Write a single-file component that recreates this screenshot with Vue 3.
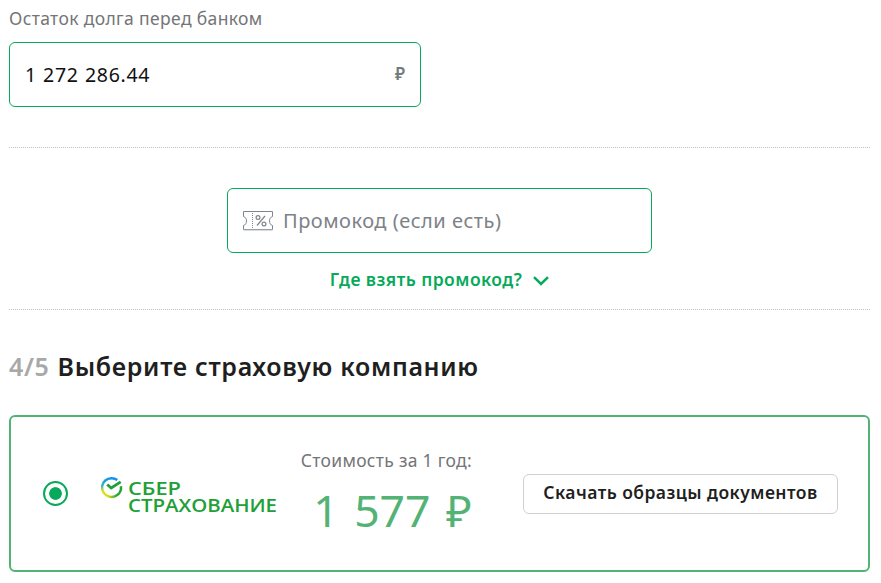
<script setup>
	import { ref } from 'vue';

	const debt = ref('1 272 286.44');
	const promo = ref('');
	const company = ref('sber');
</script>

<template>
	<div class="page">
		<!-- debt -->
		<div class="debt">
			<label for="debt"><span class="label-text">Остаток долга перед банком</span></label>
			<div class="field">
				<input id="debt" type="text" v-model="debt" />
				<span class="currency">₽</span>
			</div>
		</div>

		<!-- promo code -->
		<div class="promo">
			<div class="field promo-field">
				<svg class="ticket" width="30" height="20" viewBox="0 0 30 20" fill="none" stroke="#7d868c">
					<path d="M.5 .5H29.500V5.500C27.500 6 26.500 8 26.500 10S27.500 14 29.500 14.500V18.500H.5V14.500C2.500 14 3.500 12 3.500 10S2.500 6 .5 5.500Z" />
					<path d="M.5 19H29.500" stroke="#b5babd" />
					<path d="M9.500 2V17" stroke-dasharray="1 1" />
					<path d="M14 14.500L22 5" stroke-width="1.200" />
					<circle cx="15" cy="6.500" r="1.900" stroke-width="1.200" />
					<circle cx="21" cy="13" r="1.900" stroke-width="1.200" />
				</svg>
				<input type="text" v-model="promo" placeholder="Промокод (если есть)" />
			</div>
			<a class="where">
				<span>Где взять промокод?</span>
				<svg width="16" height="10" viewBox="0 0 16 10" fill="none" stroke="#07a95b" stroke-width="2.500">
					<path d="M1 1.200L8 8L15 1.200" />
				</svg>
			</a>
		</div>

		<!-- insurance company -->
		<h2><span class="step">4/5</span><span class="title">Выберите страховую компанию</span></h2>
		<div class="card">
			<label class="radio">
				<input type="radio" value="sber" v-model="company" />
			</label>
			<svg class="logo" width="178" height="40" viewBox="0 0 178 40">
				<defs>
					<linearGradient id="ring-left" x1="0" y1="0" x2="0" y2="1">
						<stop offset="0" stop-color="#1394e8" />
						<stop offset=".4" stop-color="#35b3c0" />
						<stop offset=".68" stop-color="#d5e22b" />
						<stop offset="1" stop-color="#d9df16" />
					</linearGradient>
					<linearGradient id="ring-right" x1="0" y1="0" x2="1" y2="0">
						<stop offset="0" stop-color="#cade19" />
						<stop offset=".6" stop-color="#36a93a" />
						<stop offset="1" stop-color="#21a038" />
					</linearGradient>
				</defs>
				<g fill="none" stroke-width="2.500">
					<path d="M17.300 4A9.300 9.300 0 0 0 11 2.200" stroke="#1294ee" />
					<path d="M11.500 2.200A9.300 9.300 0 0 0 9 20.500" stroke="url(#ring-left)" />
					<path d="M8.500 20.300A9.300 9.300 0 0 0 20.900 10.200" stroke="url(#ring-right)" />
					<path d="M7.200 8.500L11.200 12L20.700 5.800" stroke="#21a038" stroke-width="2.800" />
				</g>
				<g class="logo-text">
					<text x="28" y="18.500" textLength="53" lengthAdjust="spacingAndGlyphs">СБЕР</text>
					<text x="28" y="36" textLength="149" lengthAdjust="spacingAndGlyphs">СТРАХОВАНИЕ</text>
				</g>
			</svg>
			<div class="cost">
				<div class="cost-label">Стоимость за 1 год:</div>
				<div class="price">1 577 ₽</div>
			</div>
			<button><span>Скачать образцы документов</span></button>
		</div>
	</div>
</template>

<style>
	body {
		background: #fff;
		overflow: hidden;
	}
</style>

<style scoped>
	.page {
		box-sizing: border-box;
		height: 583px;
		padding: 0 11px 0 9px;
		font-family: 'Noto Sans', 'Open Sans', sans-serif;
		color: #1f1f22;
	}
	input {
		min-width: 0;
		padding: 0;
		border: 0;
		outline: 0;
		background: none;
		font-family: inherit;
	}
	.debt {
		box-sizing: border-box;
		height: 148px;
		border-bottom: 1px dotted #bfbfbf;
	}
	.debt label {
		display: block;
		height: 42px;
		line-height: 37px;
		font-size: 17.5px;
		letter-spacing: 0.36px;
		color: #747577;
	}
	.field {
		box-sizing: border-box;
		display: flex;
		align-items: center;
		width: 412px;
		height: 65px;
		padding: 0 15px;
		border: 1px solid #07a95b;
		border-radius: 6px;
	}
	.field input {
		flex: 1;
		height: 40px;
		font-size: 19.5px;
		letter-spacing: 0.7px;
		word-spacing: 0.5px;
		color: #111;
	}
	.currency {
		padding-bottom: 2px;
		font-size: 17px;
		font-weight: 600;
		color: #747b80;
	}
	.promo {
		box-sizing: border-box;
		display: flex;
		flex-direction: column;
		align-items: center;
		height: 162px;
		padding-top: 40px;
		border-bottom: 1px dotted #bfbfbf;
	}
	.promo-field {
		width: 425px;
		gap: 10px;
	}
	.ticket {
		flex: none;
	}
	.promo-field input {
		font-size: 20px;
		letter-spacing: 0.5px;
		word-spacing: 0;
	}
	.promo-field input::placeholder {
		color: #7d8287;
		opacity: 1;
	}
	.where {
		display: flex;
		align-items: center;
		gap: 11px;
		height: 52px;
		font-size: 17.5px;
		font-weight: 600;
		letter-spacing: 0.45px;
		color: #07a95b;
	}
	.where svg {
		margin-top: 4px;
	}
	h2 {
		display: flex;
		gap: 8px;
		height: 105px;
		margin: 0;
		line-height: 112px;
		font-size: 25px;
		font-weight: 600;
		letter-spacing: 0.67px;
		white-space: nowrap;
	}
	.step {
		color: #a8a8a9;
	}
	.card {
		box-sizing: border-box;
		display: flex;
		align-items: center;
		height: 157px;
		padding-left: 32px;
		border: 2px solid #53b374;
		border-radius: 6px;
	}
	.radio {
		width: 25px;
		height: 25px;
		margin-right: 32px;
	}
	.radio input {
		appearance: none;
		display: block;
		box-sizing: border-box;
		width: 25px;
		height: 25px;
		margin: 0;
		border: 2px solid #07a95b;
		border-radius: 50%;
	}
	.radio input:checked {
		background: radial-gradient(circle, #07a95b 5.9px, transparent 6.7px);
	}
	.logo {
		flex: none;
		margin-top: 5px;
	}
	.logo-text {
		font-family: 'Open Sans', sans-serif;
		font-size: 18px;
		font-weight: 600;
		fill: #21a038;
	}
	.cost {
		width: 172px;
		height: 92px;
		margin: 0 51px 0 22px;
		text-align: right;
		white-space: nowrap;
	}
	.cost-label {
		height: 28px;
		line-height: 24px;
		font-size: 17.5px;
		letter-spacing: 0.3px;
		color: #747577;
	}
	.price {
		line-height: 68px;
		font-size: 44.5px;
		word-spacing: 4px;
		color: #53b374;
	}
	button {
		box-sizing: border-box;
		width: 315px;
		height: 40px;
		padding: 0 0 3px;
		border: 1px solid #d0d0d1;
		border-radius: 6px;
		background: #fff;
		font-family: inherit;
		font-size: 17.5px;
		font-weight: 600;
		letter-spacing: 0.44px;
		color: #1f1f22;
		white-space: nowrap;
	}
</style>
